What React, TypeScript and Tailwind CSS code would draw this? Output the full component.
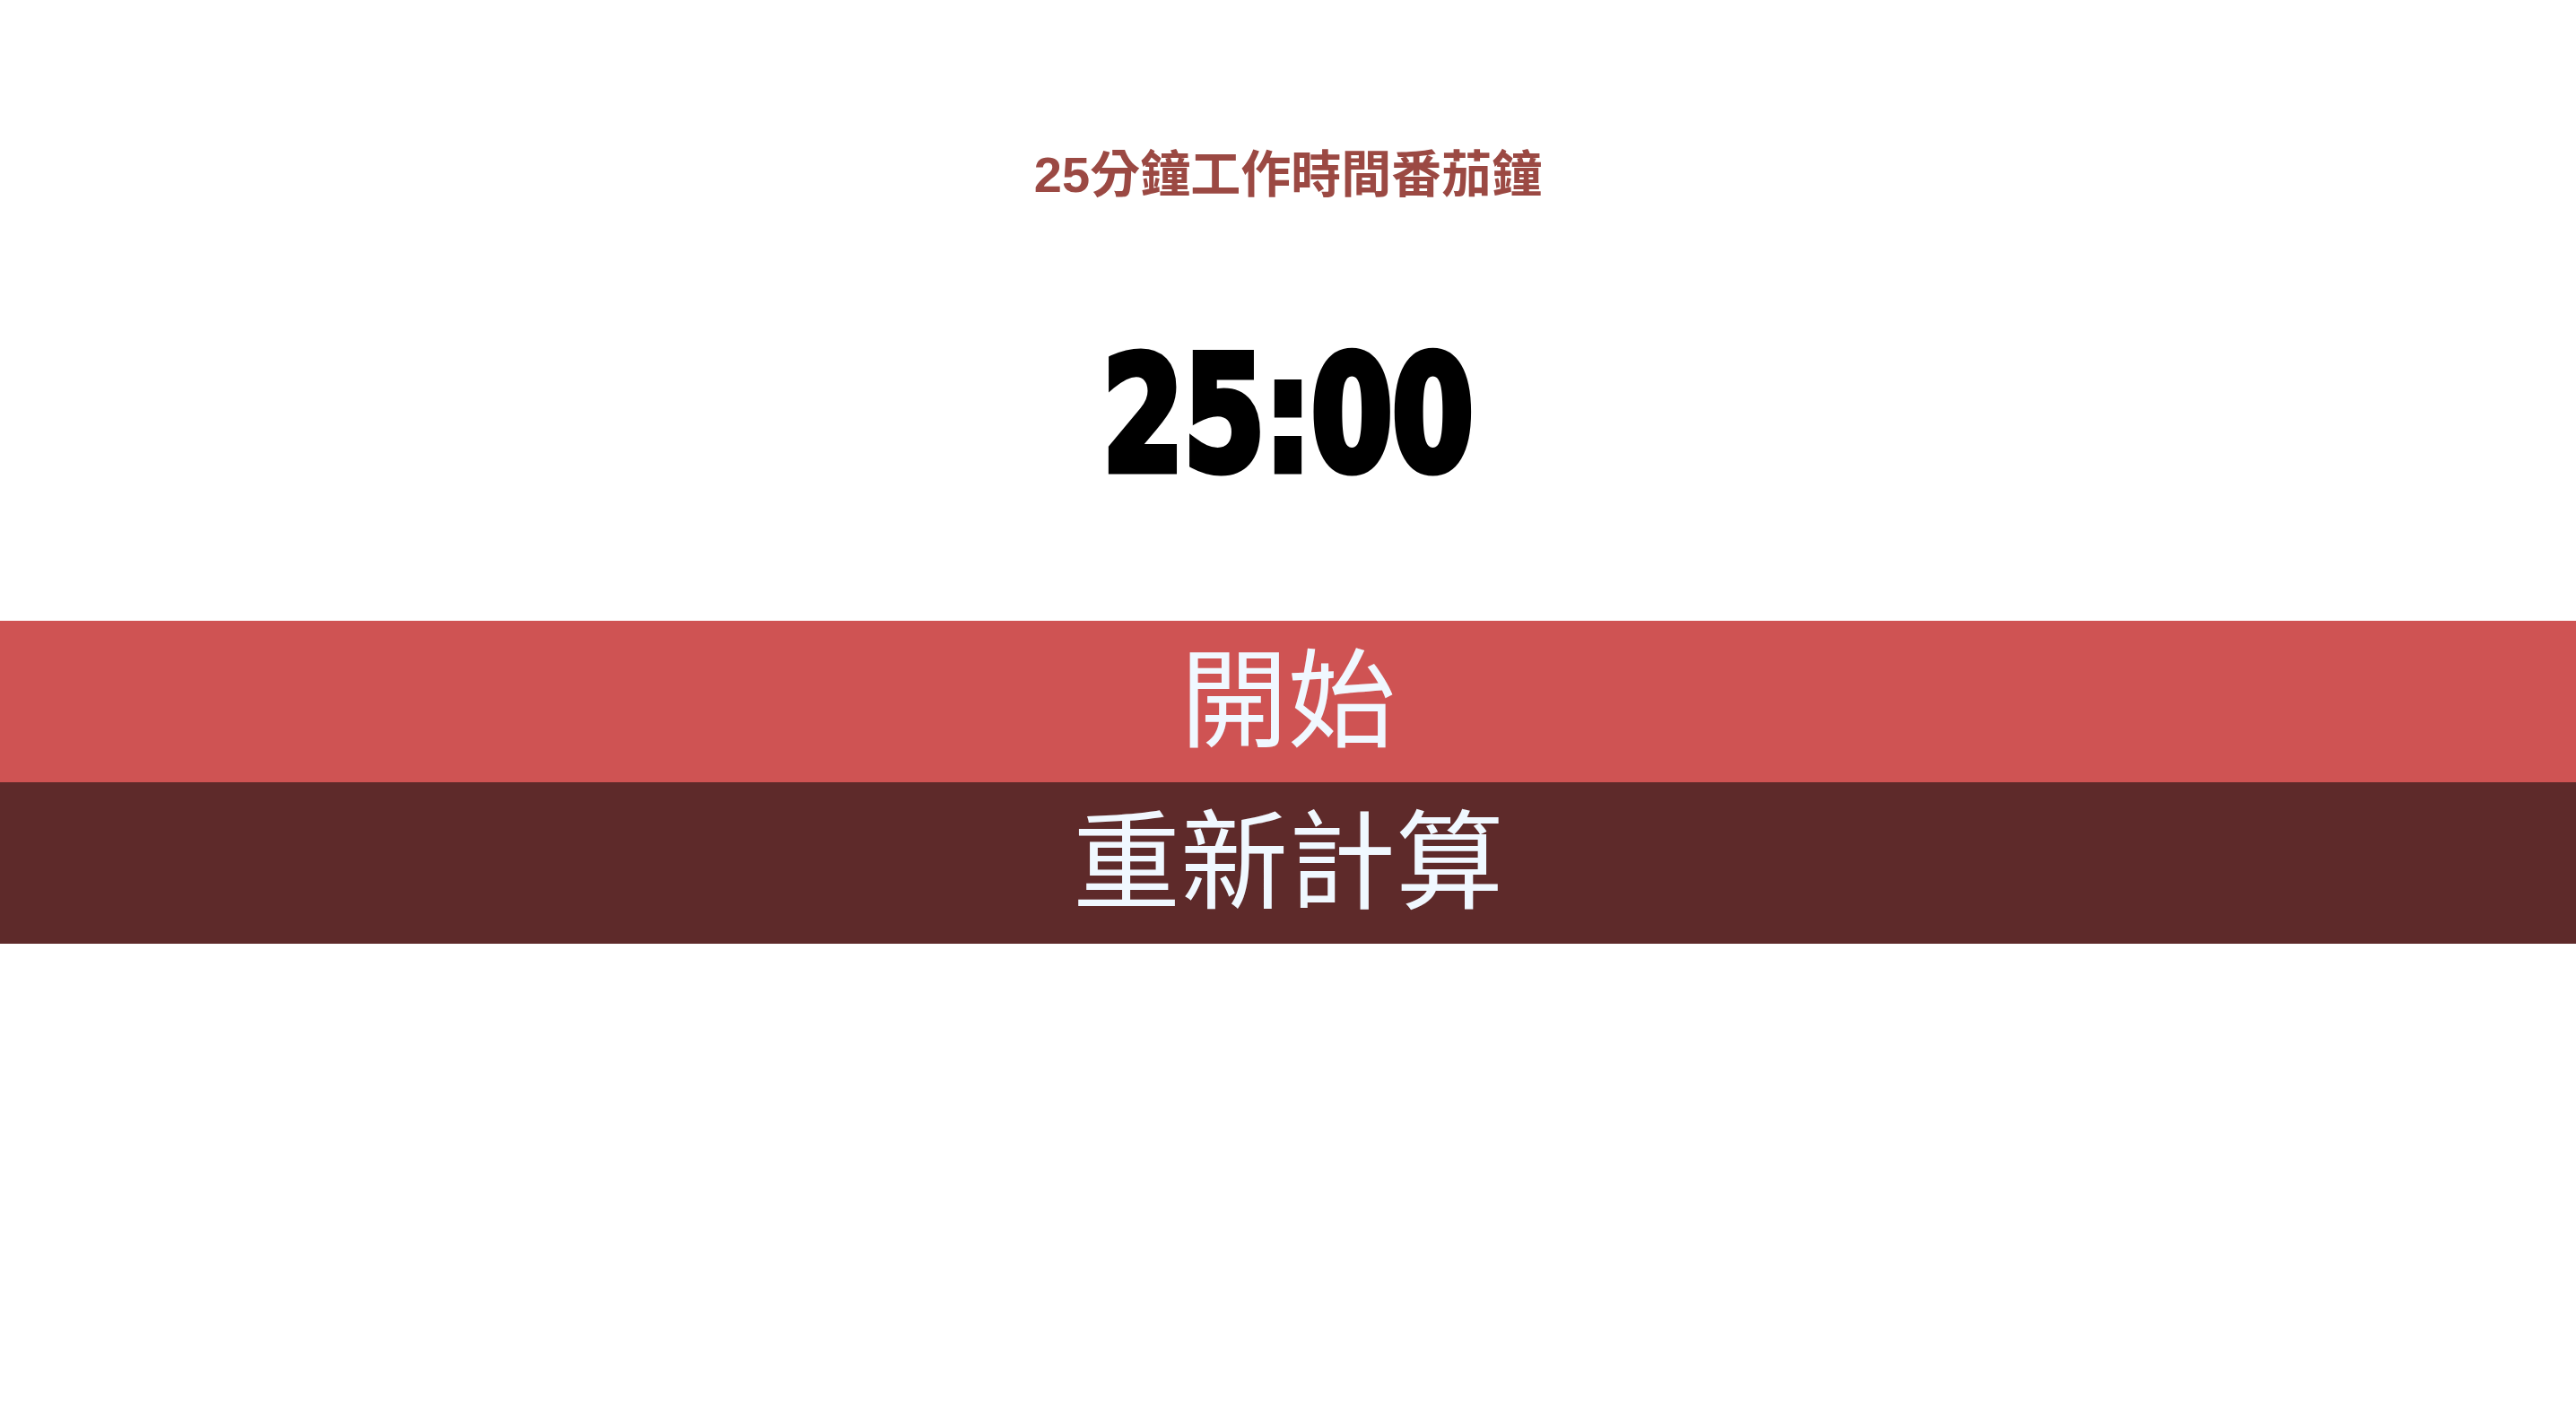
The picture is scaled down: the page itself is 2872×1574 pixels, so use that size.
import React from "react";

export default function App() {
  return (
    <div className="flex min-h-screen w-full flex-col items-center bg-white">
      <h1 className="mt-[167px] h-[56px] text-[56px] leading-[56px] font-bold text-[#9b4943] [font-family:'Liberation_Sans','Noto_Sans_CJK_TC',sans-serif]">
        25分鐘工作時間番茄鐘
      </h1>
      <div className="mt-[138px] h-[205px] scale-x-[0.82] text-[176px] leading-[205px] font-bold text-black [-webkit-text-stroke:9px_black] [font-family:'DejaVu_Sans_Condensed','DejaVu_Sans',sans-serif]">
        25:00
      </div>
      <button className="mt-[126px] flex h-[180px] w-full items-center justify-center bg-[#cf5353] pb-[20px] text-[120px] leading-none text-[#f0f8ff] [font-family:'Noto_Sans_CJK_TC',sans-serif]">
        開始
      </button>
      <button className="flex h-[180px] w-full items-center justify-center bg-[#5e2a2a] pb-[20px] text-[120px] leading-none text-[#f0f8ff] [font-family:'Noto_Sans_CJK_TC',sans-serif]">
        重新計算
      </button>
    </div>
  );
}
